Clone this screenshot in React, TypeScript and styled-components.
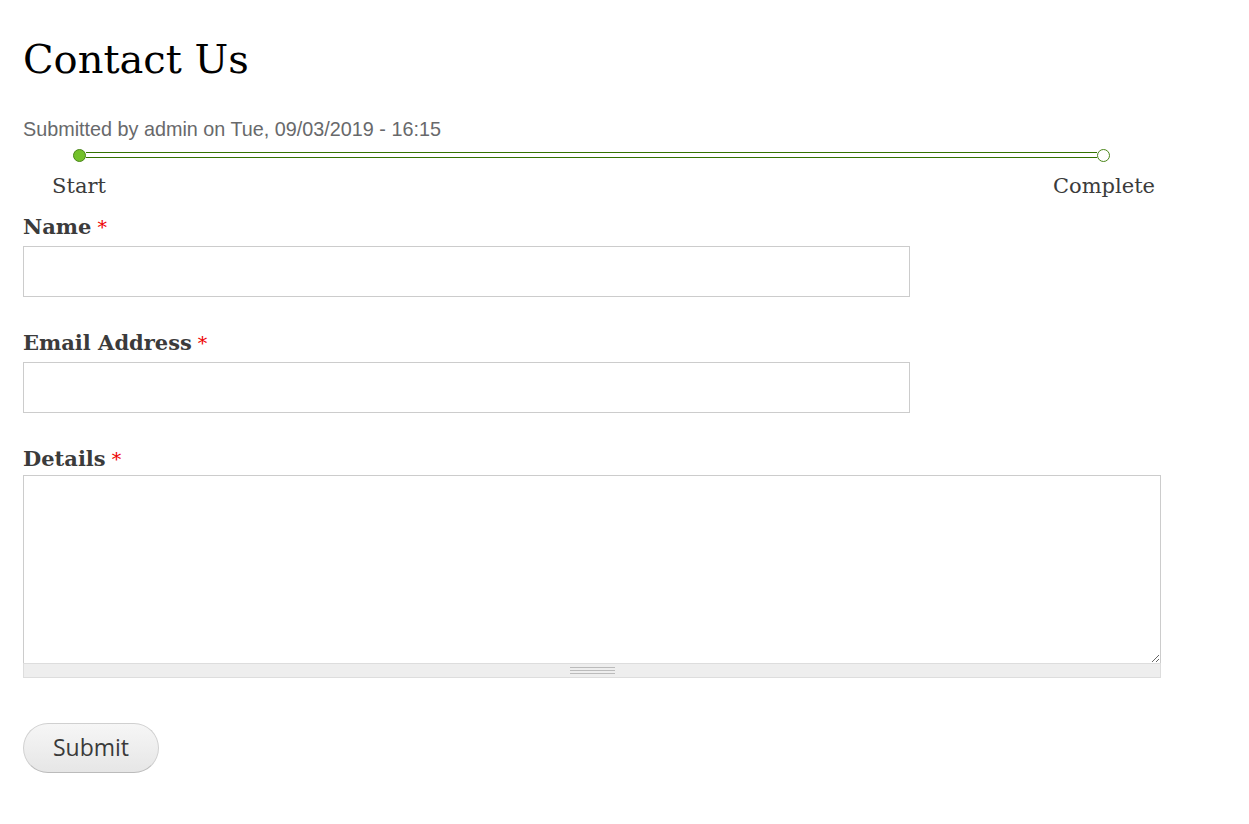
import React from 'react'
import styled, { createGlobalStyle } from 'styled-components'

const GlobalStyle = createGlobalStyle`
  html, body {
    margin: 0;
    padding: 0;
    background: #fff;
  }
  body {
    font-family: "DejaVu Serif", Georgia, serif;
    color: #3b3b3b;
  }
`

const Page = styled.main`
  padding: 24px 23px 40px;
  width: 1138px;
`

const Title = styled.h1`
  margin: 0;
  font-family: "DejaVu Serif", Georgia, serif;
  font-weight: normal;
  font-size: 40px;
  line-height: 70px;
  color: #000;
`

const Meta = styled.div`
  margin-top: 23px;
  font-family: "Liberation Sans", Arial, sans-serif;
  font-size: 19.8px;
  line-height: 24px;
  color: #68696b;
`

const Progress = styled.div`
  margin-top: 7px;
  display: flex;
  flex-direction: column;
`

const Track = styled.div`
  display: flex;
  align-items: center;
  margin-left: 50px;
  width: 1037px;
  height: 14px;
`

const Dot = styled.span<{ $done?: boolean }>`
  flex: none;
  width: 11px;
  height: 11px;
  border-radius: 50%;
  border: 1px solid #4a8519;
  background: ${(p) => (p.$done ? '#73c12a' : '#fff')};
`

const Bar = styled.span`
  flex: 1;
  height: 4px;
  border-top: 1px solid #347300;
  border-bottom: 1px solid #347300;
  background: #fff;
`

const StepLabels = styled.div`
  display: flex;
  justify-content: space-between;
  margin-top: 8px;
  margin-left: -4px;
  width: 1145px;
`

const StepLabel = styled.span`
  width: 120px;
  text-align: center;
  font-size: 21px;
  line-height: 32px;
  color: #3b3b3b;
`

const Field = styled.div<{ $gap?: number }>`
  display: flex;
  flex-direction: column;
  margin-top: ${(p) => p.$gap ?? 0}px;
`

const Label = styled.label<{ $space?: number }>`
  font-family: "DejaVu Serif", Georgia, serif;
  font-weight: bold;
  font-size: 21px;
  line-height: 26px;
  color: #3b3b3b;
  margin-bottom: ${(p) => p.$space ?? 6}px;
`

const Required = styled.span`
  color: #ee0000;
  font-weight: normal;
  font-size: 19px;
  margin-left: 6px;
`

const TextInput = styled.input`
  box-sizing: border-box;
  width: 887px;
  height: 51px;
  border: 1px solid #cccccc;
  background: #fff;
  padding: 4px 8px;
  font-size: 16px;
  outline: none;
`

const TextArea = styled.textarea`
  display: block;
  box-sizing: border-box;
  width: 1138px;
  height: 188px;
  border: 1px solid #cccccc;
  border-bottom: none;
  margin: 0;
  padding: 6px;
  resize: vertical;
  font-size: 16px;
  outline: none;
`

const Grippie = styled.div`
  box-sizing: border-box;
  width: 1138px;
  height: 15px;
  background: #eeeeee;
  border: 1px solid #dddddd;
  display: flex;
  justify-content: center;
  align-items: center;
`

const GripLines = styled.span`
  width: 45px;
  height: 7px;
  background: repeating-linear-gradient(
    to bottom,
    #bbbbbb 0,
    #bbbbbb 1px,
    transparent 1px,
    transparent 3px
  );
`

const Actions = styled.div`
  margin-top: 45px;
`

const SubmitButton = styled.button`
  box-sizing: border-box;
  width: 136px;
  height: 50px;
  border: 1px solid #d0d0d0;
  border-bottom-color: #bbbbbb;
  border-radius: 25px;
  background: linear-gradient(to bottom, #f6f6f6, #e6e6e6);
  font-family: "Open Sans", "Noto Sans", sans-serif;
  font-size: 23px;
  color: #3a3a3a;
  padding: 0 0 2px;
  cursor: pointer;
`

export default function App() {
  return (
    <>
      <GlobalStyle />
      <Page>
        <Title>Contact Us</Title>
        <Meta>Submitted by admin on Tue, 09/03/2019 - 16:15</Meta>
        <Progress>
          <Track>
            <Dot $done />
            <Bar />
            <Dot />
          </Track>
          <StepLabels>
            <StepLabel>Start</StepLabel>
            <StepLabel>Complete</StepLabel>
          </StepLabels>
        </Progress>
        <Field $gap={12}>
          <Label htmlFor="name">
            Name<Required>*</Required>
          </Label>
          <TextInput id="name" type="text" />
        </Field>
        <Field $gap={33}>
          <Label htmlFor="email">
            Email Address<Required>*</Required>
          </Label>
          <TextInput id="email" type="email" />
        </Field>
        <Field $gap={33}>
          <Label htmlFor="details" $space={3}>
            Details<Required>*</Required>
          </Label>
          <TextArea id="details" />
          <Grippie>
            <GripLines />
          </Grippie>
        </Field>
        <Actions>
          <SubmitButton type="submit">Submit</SubmitButton>
        </Actions>
      </Page>
    </>
  )
}
